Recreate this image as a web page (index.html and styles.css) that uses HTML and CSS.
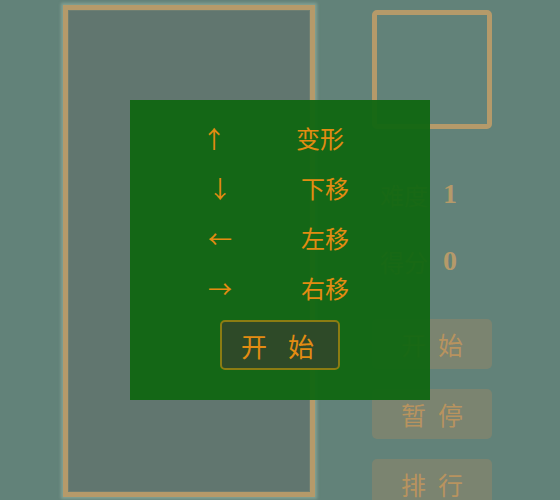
FILE: index.html
```html
<!DOCTYPE html>
<html lang="zh">
<head>
<meta charset="utf-8">
<link rel="stylesheet" href="styles.css">
</head>
<body>
<div class="app">
  <div class="board"></div>
  <div class="side">
    <div class="preview"></div>
    <div class="stats">
      <div class="stat"><span class="label">难度</span><span class="val">1</span></div>
      <div class="stat"><span class="label">得分</span><span class="val">0</span></div>
    </div>
    <div class="btns">
      <button class="btn">开始</button>
      <button class="btn">暂停</button>
      <button class="btn">排行</button>
    </div>
  </div>
</div>
<div class="overlay">
  <div class="keys">
    <span class="arrow up">↑</span><span class="act first">变形</span>
    <span class="arrow down">↓</span><span class="act">下移</span>
    <span class="arrow">←</span><span class="act">左移</span>
    <span class="arrow">→</span><span class="act">右移</span>
  </div>
  <button class="start">开始</button>
</div>
</body>
</html>
```
FILE: styles.css
```css
html, body {
  margin: 0;
  padding: 0;
  background: #628279;
  font-family: "Noto Sans CJK SC", "Noto Sans", sans-serif;
}
.app {
  display: flex;
  align-items: flex-start;
  padding: 5px 0 0 63px;
  height: 495px;
  overflow: hidden;
}
.board {
  width: 240px;
  height: 480px;
  border: 5px solid #b59a6a;
  background: #61766f;
  box-shadow: 0 0 3px 2px rgba(170, 200, 180, 0.45), inset 0 0 0 1px #6f7f72;
  padding: 1px;
  flex-shrink: 0;
}
.side {
  margin-left: 57px;
  padding-top: 5px;
  display: flex;
  flex-direction: column;
  flex-shrink: 0;
}
.side > * {
  flex-shrink: 0;
}
.preview {
  width: 110px;
  height: 109px;
  border: 5px solid #b59a6a;
  border-radius: 5px;
}
.stats {
  margin-top: 45px;
  display: flex;
  flex-direction: column;
  gap: 27px;
  padding-left: 8px;
}
.stat {
  height: 40px;
  display: flex;
  align-items: center;
  gap: 15px;
}
.label {
  font-size: 24px;
  color: #b59a6a;
}
.val {
  font-family: "Liberation Serif", serif;
  font-weight: bold;
  font-size: 28px;
  color: #b59a6a;
}
.btns {
  margin-top: 38px;
  display: flex;
  flex-direction: column;
  gap: 20px;
}
.btn {
  flex-shrink: 0;
  width: 120px;
  height: 50px;
  border: none;
  border-radius: 5px;
  background: #7b8470;
  color: #b8935f;
  font-family: "Noto Sans CJK SC", sans-serif;
  font-size: 25px;
  letter-spacing: 12px;
  text-indent: 12px;
  padding: 0;
}
.overlay {
  position: absolute;
  left: 130px;
  top: 100px;
  width: 300px;
  height: 300px;
  background: rgba(16, 102, 17, 0.95);
  display: flex;
  flex-direction: column;
  align-items: center;
  box-sizing: border-box;
  padding-top: 12px;
}
.keys {
  display: grid;
  grid-template-columns: 60px 100px;
  grid-auto-rows: 50px;
  column-gap: 25px;
  align-items: center;
  color: #e38c12;
  font-size: 24px;
  width: 185px;
  margin-left: 5px;
}
.arrow, .act {
  text-align: center;
}
.arrow.up {
  padding-right: 12px;
}
.act.first {
  padding-right: 10px;
}
.start {
  margin-top: 8px;
  width: 120px;
  height: 50px;
  border: 2px solid #8b7d12;
  border-radius: 5px;
  background: #2e4a28;
  color: #e38c12;
  font-family: "Noto Sans CJK SC", sans-serif;
  font-size: 26px;
  letter-spacing: 21px;
  text-indent: 16px;
  padding: 0;
}
```
